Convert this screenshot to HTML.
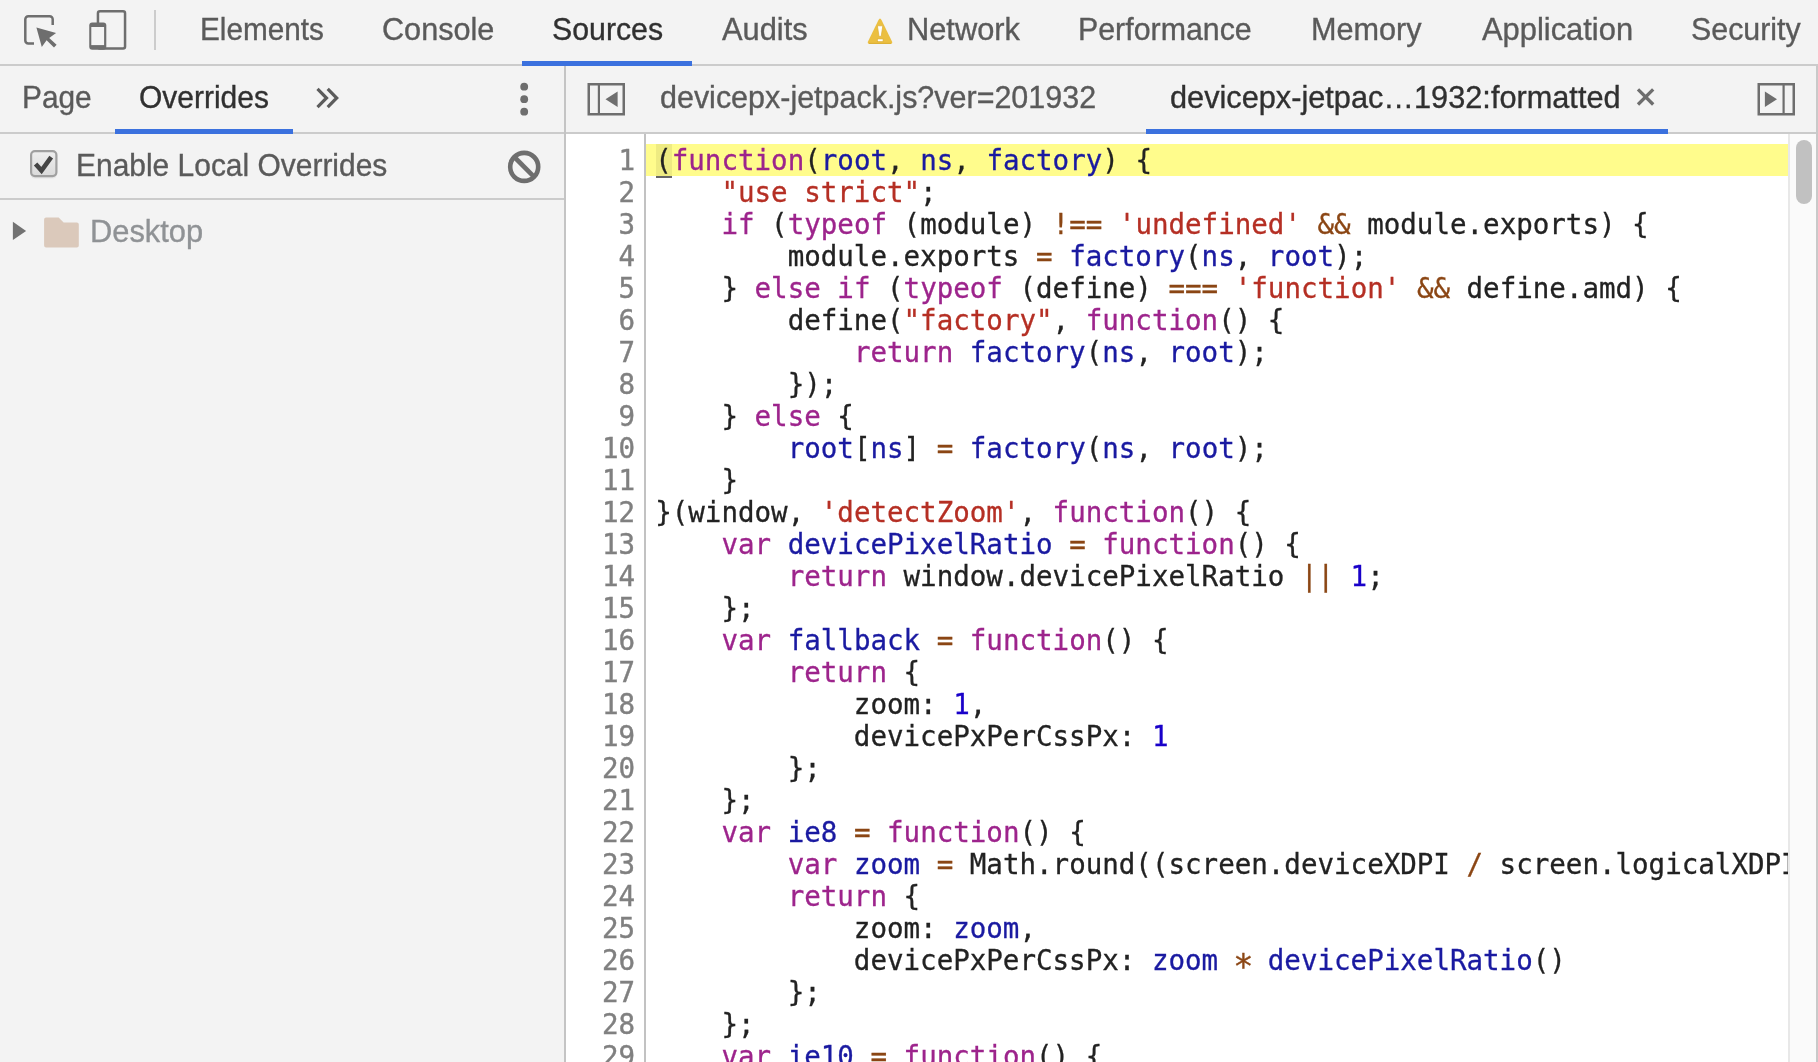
<!DOCTYPE html>
<html lang="en">
<head>
<meta charset="utf-8">
<title>DevTools - Sources</title>
<style>
html,body{margin:0;padding:0;}
html{background:#f3f3f3;}
body{width:1818px;height:1062px;overflow:hidden;background:#f3f3f3;position:relative;
  font-family:"Liberation Sans",sans-serif;font-size:30px;color:#5a5a5a;}
#root{position:absolute;left:0;top:0;width:1818px;height:1062px;will-change:transform;}
.abs{position:absolute;}
.t{position:absolute;white-space:nowrap;line-height:36px;height:36px;font-size:31.2px;transform-origin:0 0;-webkit-text-stroke:0.35px;}
/* main toolbar */
#maintb{left:0;top:0;width:1818px;height:64px;border-bottom:2px solid #cbcbcb;background:#f3f3f3;}
#vdiv{left:154px;top:10px;width:2px;height:40px;background:#cccccc;}
.sel{color:#303030;}
.blue{background:#3b71de;}
/* sidebar */
#side{left:0;top:66px;width:564px;height:996px;background:#f3f3f3;}
#split{left:564px;top:66px;width:2px;height:996px;background:#c4c4c4;}
#sidetabs{left:0;top:66px;width:564px;height:66px;border-bottom:2px solid #cbcbcb;}
#ovbar{left:0;top:134px;width:564px;height:64px;border-bottom:2px solid #cbcbcb;}
/* editor */
#edtabs{left:566px;top:66px;width:1250px;height:66px;border-bottom:2px solid #cbcbcb;background:#f3f3f3;}
#rightedge{left:1816px;top:66px;width:2px;height:996px;background:#c9c9c9;}
#editor{left:566px;top:134px;width:1250px;height:928px;background:#fff;overflow:hidden;}
#gutline{left:644px;top:134px;width:2px;height:928px;background:#c2c2c2;}
#sbtrack{left:1788px;top:134px;width:28px;height:928px;background:#fafafa;border-left:2px solid #e8e8e8;box-sizing:border-box;}
#sbthumb{left:1796px;top:140px;width:16px;height:64px;border-radius:8px;background:#c1c1c1;}
#hl{left:646px;top:144px;width:1142px;height:32px;background:#fffc8c;}
#hlp{left:656px;top:144px;width:16px;height:32px;background:#eeeb82;border-bottom:2px solid #666;}
.code,.ln{font-family:"DejaVu Sans Mono","Liberation Mono",monospace;font-size:27.5px;line-height:32px;}
.ln{-webkit-text-stroke:0.4px;position:absolute;left:566px;top:144px;width:69px;text-align:right;color:#808080;}
.code{position:absolute;left:655.2px;top:144px;width:1132.8px;-webkit-text-stroke:0.3px;overflow:hidden;color:#222;}
.code div,.ln div{height:32px;white-space:pre;}
.ast{display:inline-block;transform:translateY(5.6px) scale(1.22);}
.k{color:#9d248c;}.d{color:#1a1aa1;}.s{color:#b52f24;}.o{color:#8b4614;}.n{color:#1901c9;}
</style>
</head>
<body>
<div id="root">
<div id="maintb" class="abs"></div>
<div id="vdiv" class="abs"></div>
<div id="side" class="abs"></div>
<div id="sidetabs" class="abs"></div>
<div id="ovbar" class="abs"></div>
<div id="split" class="abs"></div>
<div id="edtabs" class="abs"></div>
<div id="editor" class="abs"></div>
<div id="rightedge" class="abs"></div>
<div id="hl" class="abs"></div>
<div id="hlp" class="abs"></div>
<div id="gutline" class="abs"></div>
<div id="sbtrack" class="abs"></div>
<div id="sbthumb" class="abs"></div>


<!-- ICONS -->
<svg class="abs" id="icons" style="left:0;top:0;" width="1818" height="1062" viewBox="0 0 1818 1062">
  <defs>
    <linearGradient id="cbg" x1="0" y1="0" x2="0" y2="1"><stop offset="0" stop-color="#efefef"/><stop offset="1" stop-color="#dadada"/></linearGradient>
  </defs>
  <!-- inspect -->
  <path d="M52.7 24.9 V19.2 a3 3 0 0 0 -3 -3 H28.3 a3 3 0 0 0 -3 3 V40.6 a3 3 0 0 0 3 3 H34" fill="none" stroke="#6e6e6e" stroke-width="2.5"/>
  <path d="M36.4 27.5 L56.1 32.9 L49.2 37.9 L56.6 44.8 L54 47.4 L46.6 40.3 L41.8 47 Z" fill="#6e6e6e"/>
  <!-- device -->
  <rect x="97.95" y="11.35" width="27.1" height="37.2" rx="2" fill="none" stroke="#6e6e6e" stroke-width="2.5"/>
  <rect x="89.25" y="22.6" width="17.05" height="27.2" rx="3" fill="#6e6e6e"/>
  <rect x="91.3" y="27" width="12.8" height="18.1" fill="#f3f3f3"/>
  <!-- warning -->
  <path d="M878.5 19.9 Q880 16.9 881.5 19.9 L892 41.6 Q892.9 44 890.4 44 H869.6 Q867.1 44 868 41.6 Z" fill="#ebbf41"/>
  <path d="M869 43.4 H891" stroke="#ddb136" stroke-width="1.2"/>
  <path d="M877.4 25.8 H882.8 L881.2 36.4 H879 Z" fill="#fff" stroke="#dcae33" stroke-width="0.7"/>
  <rect x="877.3" y="38.9" width="5.8" height="2.8" fill="#fff" stroke="#dcae33" stroke-width="0.7"/>
  <!-- chevrons -->
  <path d="M317.5 88.9 L326.5 98 L317.5 107.1 M327.7 88.9 L336.7 98 L327.7 107.1" fill="none" stroke="#5c5c5c" stroke-width="3.2"/>
  <!-- kebab -->
  <circle cx="524.2" cy="86.7" r="3.9" fill="#6e6e6e"/><circle cx="524.2" cy="99.2" r="3.9" fill="#6e6e6e"/><circle cx="524.2" cy="111.7" r="3.9" fill="#6e6e6e"/>
  <!-- checkbox -->
  <rect x="30.5" y="152" width="26.5" height="26.5" rx="4.5" fill="#e6e6e6"/>
  <rect x="31.1" y="151.1" width="25.3" height="25" rx="3.8" fill="url(#cbg)" stroke="#a0a0a0" stroke-width="2.2"/>
  <path d="M35.6 164 L41.5 170.6 L51.2 157.2" fill="none" stroke="#444" stroke-width="4.6" stroke-linejoin="miter"/>
  <!-- block -->
  <circle cx="524.2" cy="166.9" r="14" fill="none" stroke="#6e6e6e" stroke-width="4.6"/>
  <path d="M514.3 157 L534.1 176.8" stroke="#6e6e6e" stroke-width="4.6"/>
  <!-- tree -->
  <path d="M12.9 221.8 L26.1 230.9 L12.9 240 Z" fill="#727272"/>
  <path d="M46.1 217.4 H58.6 L63.6 222.6 H76.8 a2 2 0 0 1 2 2 V245.4 a2 2 0 0 1 -2 2 H46.1 a2 2 0 0 1 -2 -2 V219.4 a2 2 0 0 1 2 -2 Z" fill="#dbc9bb"/>
  <!-- left toggle -->
  <rect x="588.75" y="84.25" width="35" height="30" fill="none" stroke="#6e6e6e" stroke-width="2.5"/>
  <rect x="597.8" y="84" width="2.2" height="30.5" fill="#6e6e6e"/>
  <path d="M605.5 99.2 L617.6 91.4 V107 Z" fill="#6e6e6e"/>
  <!-- right toggle -->
  <rect x="1758.75" y="84.25" width="35" height="30" fill="none" stroke="#6e6e6e" stroke-width="2.5"/>
  <rect x="1782.5" y="84" width="2.2" height="30.5" fill="#6e6e6e"/>
  <path d="M1777 99.2 L1764.9 91.4 V107 Z" fill="#6e6e6e"/>
  <!-- close -->
  <path d="M1638 89.3 L1653.2 104.5 M1653.2 89.3 L1638 104.5" stroke="#6e6e6e" stroke-width="3.3"/>
</svg>

<!-- main tabs -->
<span class="t" id="m1" style="left:199.61px;top:12px;transform:scaleX(0.9529);">Elements</span>
<span class="t" id="m2" style="left:381.53px;top:12px;transform:scaleX(0.9821);">Console</span>
<span class="t sel" id="m3" style="left:551.54px;top:12px;transform:scaleX(0.9711);">Sources</span>
<span class="t" id="m4" style="left:721.70px;top:12px;transform:scaleX(0.9882);">Audits</span>
<span class="t" id="m5" style="left:907.22px;top:12px;transform:scaleX(0.9870);">Network</span>
<span class="t" id="m6" style="left:1078.45px;top:12px;transform:scaleX(0.9729);">Performance</span>
<span class="t" id="m7" style="left:1311.13px;top:12px;transform:scaleX(0.9820);">Memory</span>
<span class="t" id="m8" style="left:1482.40px;top:12px;transform:scaleX(0.9902);">Application</span>
<span class="t" id="m9" style="left:1690.93px;top:12px;transform:scaleX(0.9736);">Security</span>
<div class="abs blue" style="left:522px;top:61px;width:170px;height:5px;"></div>

<!-- sidebar tabs -->
<span class="t" id="s1" style="left:21.73px;top:80px;transform:scaleX(0.9559);">Page</span>
<span class="t sel" id="s2" style="left:139.34px;top:80px;transform:scaleX(0.9606);">Overrides</span>
<div class="abs blue" style="left:115px;top:129px;width:178px;height:5px;"></div>
<span class="t" id="s3" style="left:75.80px;top:148px;transform:scaleX(0.9603);">Enable Local Overrides</span>
<span class="t" id="s4" style="left:90.13px;top:214px;transform:scaleX(0.9888);color:#8f9295;">Desktop</span>

<!-- editor tabs -->
<span class="t" id="e1" style="left:659.81px;top:80px;transform:scaleX(0.9768);">devicepx-jetpack.js?ver=201932</span>
<span class="t sel" id="e2" style="left:1169.81px;top:80px;transform:scaleX(0.9845);">devicepx-jetpac…1932:formatted</span>
<div class="abs blue" style="left:1146px;top:129px;width:522px;height:5px;"></div>

<!-- CODE -->
<div class="ln" id="ln">
<div>1</div>
<div>2</div>
<div>3</div>
<div>4</div>
<div>5</div>
<div>6</div>
<div>7</div>
<div>8</div>
<div>9</div>
<div>10</div>
<div>11</div>
<div>12</div>
<div>13</div>
<div>14</div>
<div>15</div>
<div>16</div>
<div>17</div>
<div>18</div>
<div>19</div>
<div>20</div>
<div>21</div>
<div>22</div>
<div>23</div>
<div>24</div>
<div>25</div>
<div>26</div>
<div>27</div>
<div>28</div>
<div>29</div>
<div>30</div>
</div>
<div class="code" id="code">
<div>(<span class="k">function</span>(<span class="d">root</span>, <span class="d">ns</span>, <span class="d">factory</span>) {</div>
<div>    <span class="s">"use strict"</span>;</div>
<div>    <span class="k">if</span> (<span class="k">typeof</span> (module) <span class="o">!==</span> <span class="s">'undefined'</span> <span class="o">&amp;&amp;</span> module.exports) {</div>
<div>        module.exports <span class="o">=</span> <span class="d">factory</span>(<span class="d">ns</span>, <span class="d">root</span>);</div>
<div>    } <span class="k">else</span> <span class="k">if</span> (<span class="k">typeof</span> (define) <span class="o">===</span> <span class="s">'function'</span> <span class="o">&amp;&amp;</span> define.amd) {</div>
<div>        define(<span class="s">"factory"</span>, <span class="k">function</span>() {</div>
<div>            <span class="k">return</span> <span class="d">factory</span>(<span class="d">ns</span>, <span class="d">root</span>);</div>
<div>        });</div>
<div>    } <span class="k">else</span> {</div>
<div>        <span class="d">root</span>[<span class="d">ns</span>] <span class="o">=</span> <span class="d">factory</span>(<span class="d">ns</span>, <span class="d">root</span>);</div>
<div>    }</div>
<div>}(window, <span class="s">'detectZoom'</span>, <span class="k">function</span>() {</div>
<div>    <span class="k">var</span> <span class="d">devicePixelRatio</span> <span class="o">=</span> <span class="k">function</span>() {</div>
<div>        <span class="k">return</span> window.devicePixelRatio <span class="o">||</span> <span class="n">1</span>;</div>
<div>    };</div>
<div>    <span class="k">var</span> <span class="d">fallback</span> <span class="o">=</span> <span class="k">function</span>() {</div>
<div>        <span class="k">return</span> {</div>
<div>            zoom: <span class="n">1</span>,</div>
<div>            devicePxPerCssPx: <span class="n">1</span></div>
<div>        };</div>
<div>    };</div>
<div>    <span class="k">var</span> <span class="d">ie8</span> <span class="o">=</span> <span class="k">function</span>() {</div>
<div>        <span class="k">var</span> <span class="d">zoom</span> <span class="o">=</span> Math.round((screen.deviceXDPI <span class="o">/</span> screen.logicalXDPI) <span class="o ast">*</span> <span class="n">100</span>) <span class="o">/</span> <span class="n">100</span>;</div>
<div>        <span class="k">return</span> {</div>
<div>            zoom: <span class="d">zoom</span>,</div>
<div>            devicePxPerCssPx: <span class="d">zoom</span> <span class="o ast">*</span> <span class="d">devicePixelRatio</span>()</div>
<div>        };</div>
<div>    };</div>
<div>    <span class="k">var</span> <span class="d">ie10</span> <span class="o">=</span> <span class="k">function</span>() {</div>
<div>        <span class="k">var</span> <span class="d">zoom</span> <span class="o">=</span> Math.round((document.documentElement.offsetHeight <span class="o">/</span> window.innerHeight) <span class="o ast">*</span> <span class="n">100</span>) <span class="o">/</span> <span class="n">100</span>;</div>
</div>
</div>
</body>
</html>
